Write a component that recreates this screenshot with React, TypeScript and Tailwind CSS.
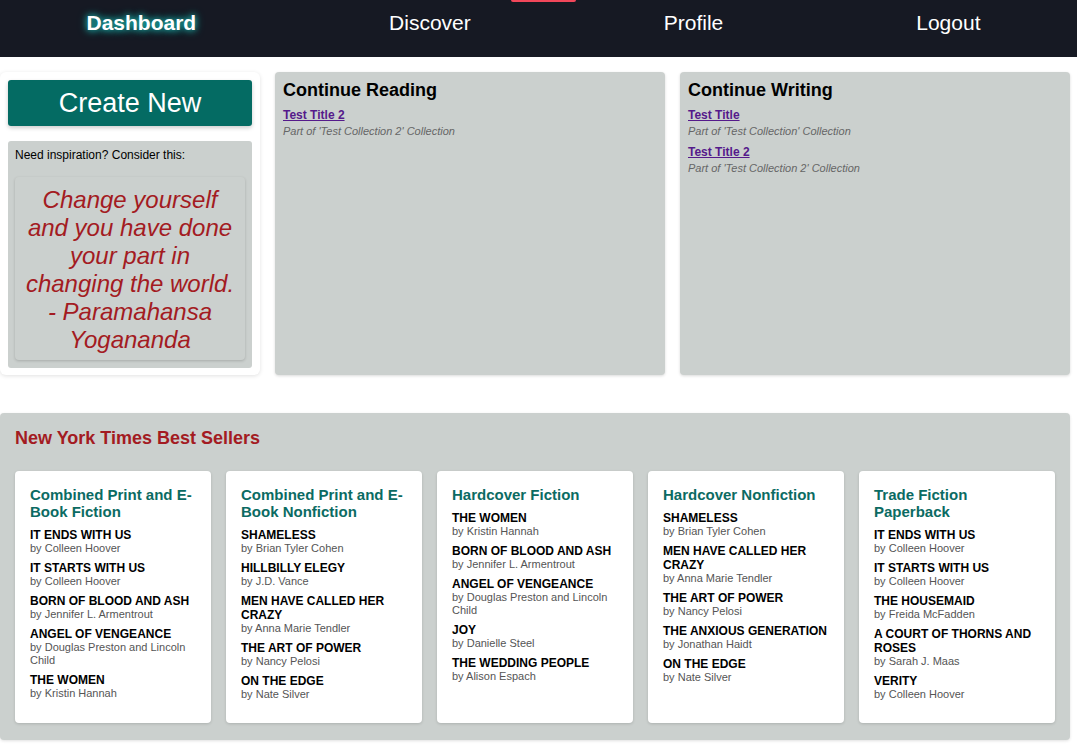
import React from "react";

type Book = { title: string; author: string };
type List = { name: string; books: Book[] };

const NAV = ["Dashboard", "Discover", "Profile", "Logout"];

const LISTS: List[] = [
  {
    name: "Combined Print and E-Book Fiction",
    books: [
      { title: "IT ENDS WITH US", author: "Colleen Hoover" },
      { title: "IT STARTS WITH US", author: "Colleen Hoover" },
      { title: "BORN OF BLOOD AND ASH", author: "Jennifer L. Armentrout" },
      { title: "ANGEL OF VENGEANCE", author: "Douglas Preston and Lincoln Child" },
      { title: "THE WOMEN", author: "Kristin Hannah" },
    ],
  },
  {
    name: "Combined Print and E-Book Nonfiction",
    books: [
      { title: "SHAMELESS", author: "Brian Tyler Cohen" },
      { title: "HILLBILLY ELEGY", author: "J.D. Vance" },
      { title: "MEN HAVE CALLED HER CRAZY", author: "Anna Marie Tendler" },
      { title: "THE ART OF POWER", author: "Nancy Pelosi" },
      { title: "ON THE EDGE", author: "Nate Silver" },
    ],
  },
  {
    name: "Hardcover Fiction",
    books: [
      { title: "THE WOMEN", author: "Kristin Hannah" },
      { title: "BORN OF BLOOD AND ASH", author: "Jennifer L. Armentrout" },
      { title: "ANGEL OF VENGEANCE", author: "Douglas Preston and Lincoln Child" },
      { title: "JOY", author: "Danielle Steel" },
      { title: "THE WEDDING PEOPLE", author: "Alison Espach" },
    ],
  },
  {
    name: "Hardcover Nonfiction",
    books: [
      { title: "SHAMELESS", author: "Brian Tyler Cohen" },
      { title: "MEN HAVE CALLED HER CRAZY", author: "Anna Marie Tendler" },
      { title: "THE ART OF POWER", author: "Nancy Pelosi" },
      { title: "THE ANXIOUS GENERATION", author: "Jonathan Haidt" },
      { title: "ON THE EDGE", author: "Nate Silver" },
    ],
  },
  {
    name: "Trade Fiction Paperback",
    books: [
      { title: "IT ENDS WITH US", author: "Colleen Hoover" },
      { title: "IT STARTS WITH US", author: "Colleen Hoover" },
      { title: "THE HOUSEMAID", author: "Freida McFadden" },
      { title: "A COURT OF THORNS AND ROSES", author: "Sarah J. Maas" },
      { title: "VERITY", author: "Colleen Hoover" },
    ],
  },
];

const READING = [{ title: "Test Title 2", collection: "Test Collection 2" }];
const WRITING = [
  { title: "Test Title", collection: "Test Collection" },
  { title: "Test Title 2", collection: "Test Collection 2" },
];

function WorkList({ heading, items }: { heading: string; items: { title: string; collection: string }[] }) {
  return (
    <div className="bg-[#cbd0ce] rounded-[4px] shadow-[0_1px_3px_rgba(0,0,0,0.15)] px-2 pt-[8px] h-[303px]">
      <h2 className="text-[18px] leading-[21px] font-bold text-black mb-[7px]">{heading}</h2>
      {items.map((w, i) => (
        <div key={i} className="mb-[7px]">
          <a href="#" className="block text-[12px] font-bold underline text-[#551a8b] leading-[14px]">
            {w.title}
          </a>
          <p className="text-[11px] italic text-[#666] leading-[13px] mt-[3px]">
            Part of '{w.collection}' Collection
          </p>
        </div>
      ))}
    </div>
  );
}

export default function App() {
  return (
    <div className="min-h-[746px] bg-white font-['Liberation_Sans',Arial,sans-serif]">
      {/* nav bar */}
      <nav className="relative h-[57px] bg-[#161923] flex justify-around items-start pt-[11px]">
        <span className="absolute left-[511px] top-0 w-[65px] h-[2px] rounded-b-full bg-[#f2475a]" />
        {NAV.map((n, i) => (
          <a
            key={n}
            href="#"
            className={`text-[21px] leading-[24px] text-white ${
              i === 0 ? "-ml-[10px] font-bold [text-shadow:0_0_6px_#1fc4bd,0_0_10px_#0e8f8a]" : ""
            }`}
          >
            {n}
          </a>
        ))}
      </nav>

      {/* top row */}
      <div className="grid grid-cols-[260px_390px_390px] gap-[15px] mt-[15px]">
        <div className="bg-white rounded-[6px] shadow-[0_1px_4px_rgba(0,0,0,0.12)] px-2 pt-2 pb-2 h-[303px]">
          <button className="w-full h-[46px] bg-[#046b63] text-white text-[27px] leading-[31px] rounded-[3px] shadow-[0_2px_4px_rgba(0,0,0,0.2)]">
            Create New
          </button>
          <div className="mt-[15px] bg-[#cbd0ce] rounded-[3px] px-[7px] pt-[7px] pb-2">
            <p className="text-[12px] leading-[14px] text-black">Need inspiration? Consider this:</p>
            <div className="mt-[15px] bg-[#cbd0ce] rounded-[4px] shadow-[0_1px_3px_rgba(0,0,0,0.18)] pt-[9px] pb-[6px] px-[10px]">
              <p className="text-[24px] leading-[28px] italic text-center text-[#a31b22]">
                Change yourself and you have done your part in changing the world. - Paramahansa Yogananda
              </p>
            </div>
          </div>
        </div>
        <WorkList heading="Continue Reading" items={READING} />
        <WorkList heading="Continue Writing" items={WRITING} />
      </div>

      {/* best sellers */}
      <section className="w-[1070px] mt-[38px] bg-[#cbd0ce] rounded-[4px] shadow-[0_1px_3px_rgba(0,0,0,0.12)] px-[15px] pt-[15px] pb-[17px]">
        <h2 className="text-[18px] font-bold text-[#a31b22] leading-[21px]">New York Times Best Sellers</h2>
        <div className="grid grid-cols-5 gap-[15px] mt-[22px]">
          {LISTS.map((l) => (
            <div key={l.name} className="bg-white rounded-[4px] shadow-[0_1px_3px_rgba(0,0,0,0.15)] px-[15px] pt-[15px] pb-[16px]">
              <h3 className="text-[15px] font-bold text-[#0b6b63] leading-[17px] mb-[8px]">{l.name}</h3>
              {l.books.map((b, i) => (
                <div key={i} className="mb-[6px]">
                  <p className="text-[12px] font-bold text-black leading-[14px]">{b.title}</p>
                  <p className="text-[11px] text-[#555] leading-[13px]">by {b.author}</p>
                </div>
              ))}
            </div>
          ))}
        </div>
      </section>
    </div>
  );
}
